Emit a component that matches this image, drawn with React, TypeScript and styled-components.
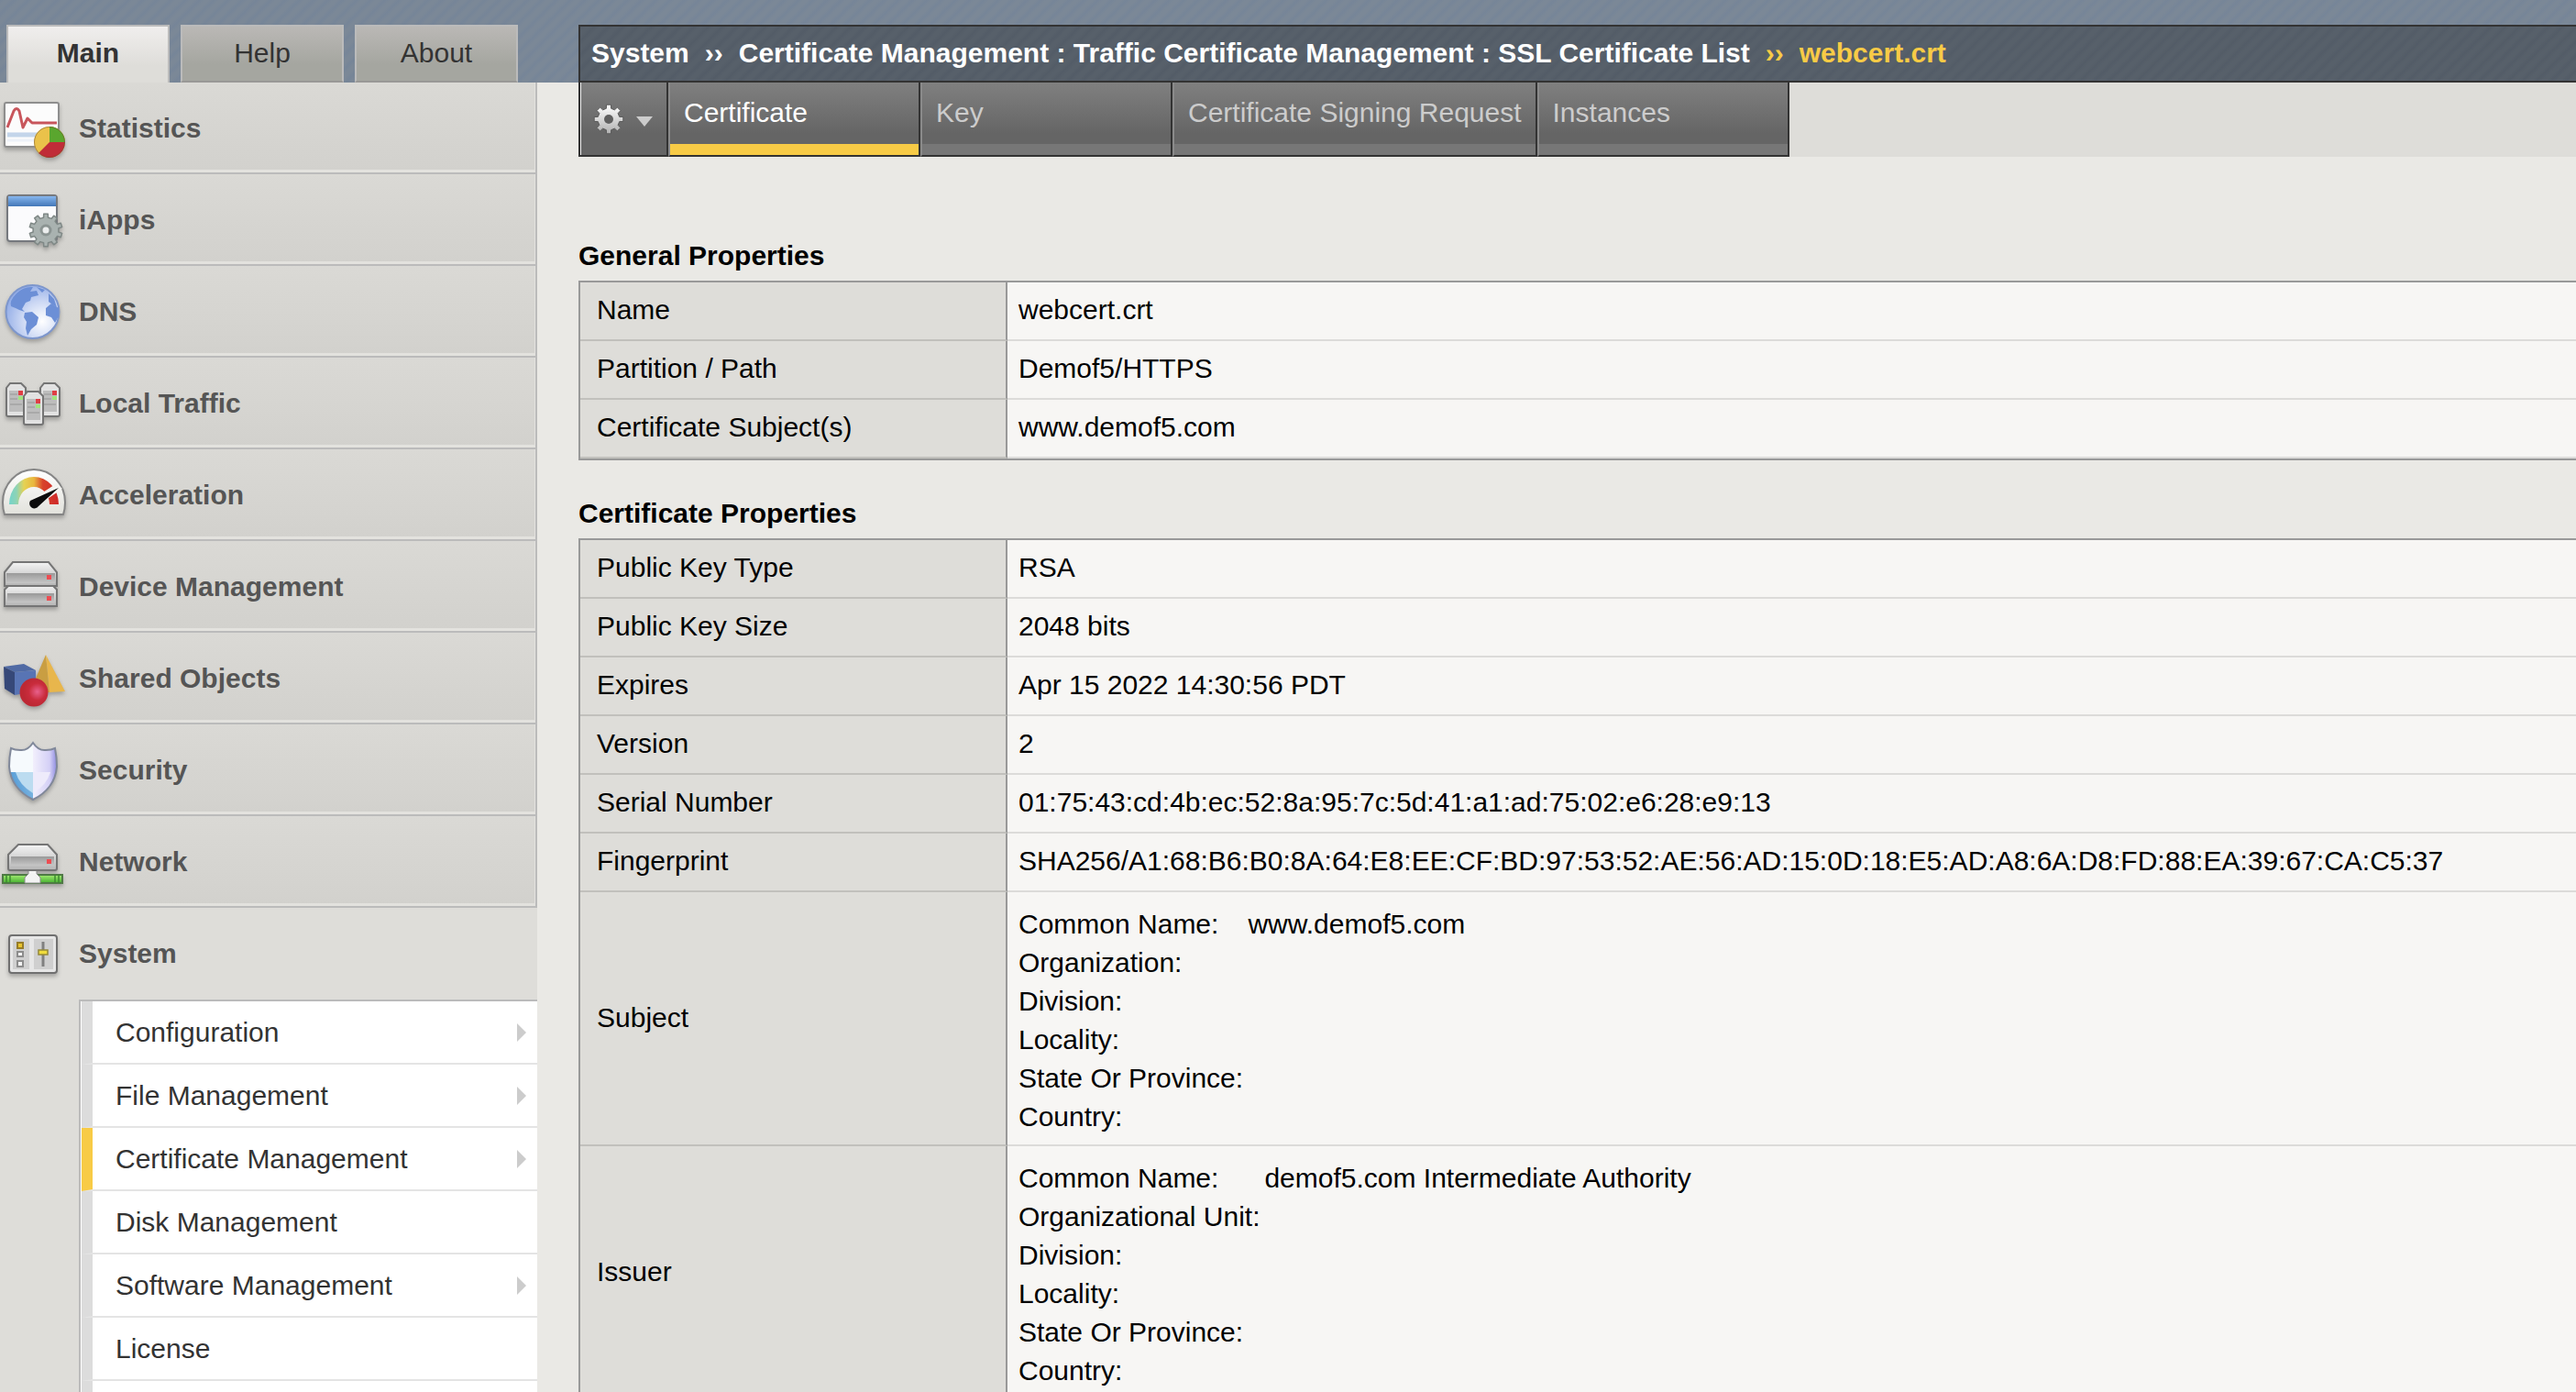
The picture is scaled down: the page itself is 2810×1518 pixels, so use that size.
import React from 'react';
import styled, { createGlobalStyle } from 'styled-components';

const color = {
  page: '#eae9e5',
  panel: '#deddd9',
  line: '#bbbbbb',
  accent: '#f8cb46',
  dark: '#333333',
  outline: '#999999',
};

const GlobalStyle = createGlobalStyle`
  *, *::before, *::after { box-sizing: border-box; }
  body {
    margin: 0;
    background: ${color.page};
    font-family: Arial, "Liberation Sans", Helvetica, sans-serif;
    font-size: 30px;
    line-height: 42px;
    color: #000;
  }
  a { color: inherit; text-decoration: none; }
  button { font: inherit; color: inherit; margin: 0; cursor: pointer; }
  ul, ol, dl, dd { margin: 0; padding: 0; list-style: none; }
`;

const Page = styled.div`
  display: flex;
  flex-direction: column;
  height: 100vh;
  overflow: hidden;
`;

const Header = styled.header`
  display: flex;
  align-items: flex-end;
  flex: none;
  height: 90px;
  background: repeating-linear-gradient(135deg, #768598 0, #7b8897 4px, #7b8897 7px, #768598 11px);
`;

const HeaderTabs = styled.nav`
  display: flex;
  flex: none;
  gap: 12px;
  width: 631px;
  padding-left: 7px;
`;

const HeaderTab = styled.a<{ $active?: boolean }>`
  width: 178px;
  height: 63px;
  padding-top: 8px;
  text-align: center;
  color: #333;
  border: 2px solid ${color.line};
  border-bottom: ${(p) => (p.$active ? '0' : '2px solid #999896')};
  font-weight: ${(p) => (p.$active ? 700 : 400)};
  background: ${(p) =>
    p.$active
      ? 'linear-gradient(#f0eeed, #deddd9 70%)'
      : 'linear-gradient(#bab8b5, #a5a6a0 70%)'};
`;

const Breadcrumb = styled.ol`
  display: flex;
  flex: 1;
  gap: 17px;
  height: 63px;
  padding: 8px 0 0 12px;
  border: 2px solid ${color.dark};
  border-right: 0;
  font-weight: 700;
  white-space: nowrap;
  color: #fff;
  background: repeating-linear-gradient(135deg, #535c67 0, #57606a 4px, #57606a 7px, #535c67 11px);
`;

const Crumb = styled.li<{ $current?: boolean }>`
  color: ${(p) => (p.$current ? color.accent : 'inherit')};
`;

const Body = styled.div`
  display: flex;
  flex: 1;
  min-height: 0;
`;

const Sidebar = styled.nav`
  display: flex;
  flex-direction: column;
  flex: none;
  width: 586px;
  background: ${color.panel};
`;

const NavLink = styled.a<{ $open?: boolean }>`
  display: flex;
  align-items: center;
  flex: none;
  gap: 14px;
  height: 100px;
  font-weight: 700;
  color: #555;
  border-right: 2px solid ${(p) => (p.$open ? 'transparent' : color.line)};
  border-bottom: 2px solid ${(p) => (p.$open ? 'transparent' : color.line)};
  background: ${(p) => (p.$open ? color.panel : 'linear-gradient(#dad9d5, #d2d1cd)')};
  box-shadow: ${(p) => (p.$open ? 'none' : 'inset -1px -3px 0 #e3e2de')};
`;

const NavIcon = styled.svg`
  flex: none;
  width: 72px;
  height: 98px;
  filter: drop-shadow(0 3px 2px rgba(0, 0, 0, 0.25));
`;

const NavLabel = styled.span`
  padding-top: 2px;
`;

const SubMenu = styled.ul`
  display: flex;
  flex-direction: column;
  flex: 1;
  margin-left: 86px;
  padding-left: 1px;
  border-top: 2px solid ${color.line};
  border-left: 2px solid ${color.line};
  background: #fff;
`;

const SubLink = styled.a<{ $active?: boolean }>`
  display: flex;
  align-items: center;
  justify-content: space-between;
  height: 69px;
  padding: 0 12px 0 25px;
  color: #333;
  border-left: 12px solid ${(p) => (p.$active ? color.accent : '#dcdcdc')};
  border-bottom: 2px solid #e4e4e4;
`;

const SubMenuEnd = styled.li`
  flex: 1;
  border-left: 12px solid #dcdcdc;
`;

const SubArrow = styled.span`
  border-left: 10px solid #ccc;
  border-top: 10px solid transparent;
  border-bottom: 10px solid transparent;
`;

const Main = styled.main`
  flex: 1;
  min-width: 0;
  margin-left: 45px;
`;

const Toolbar = styled.div`
  display: flex;
  height: 81px;
  margin-bottom: 87px;
  background: ${color.panel};
`;

const toolbarFill = 'linear-gradient(#808080, #656565 70%)';

const GearButton = styled.button`
  display: flex;
  align-items: center;
  gap: 13px;
  width: 98px;
  padding: 0 0 0 14px;
  border: 2px solid ${color.dark};
  border-top: 0;
  background: ${toolbarFill};
  box-shadow: inset 1px 0 0 #eee;
`;

const DownArrow = styled.span`
  margin-top: 6px;
  border-top: 11px solid #ccc;
  border-left: 9px solid transparent;
  border-right: 9px solid transparent;
`;

const ToolbarTabs = styled.nav`
  display: flex;
`;

const ToolbarTab = styled.a<{ $active?: boolean }>`
  display: flex;
  flex-direction: column;
  justify-content: space-between;
  min-width: 275px;
  white-space: nowrap;
  color: ${(p) => (p.$active ? '#fff' : '#ccc')};
  border-left: 2px solid #8a8a8a;
  border-right: 2px solid ${color.dark};
  border-bottom: 2px solid ${color.dark};
  background: ${toolbarFill};

  &::after {
    content: '';
    height: 12px;
    background: ${(p) => (p.$active ? color.accent : '#777')};
  }
`;

const ToolbarLabel = styled.span`
  padding: 12px 15px 0;
`;

const Section = styled.section`
  margin-bottom: 37px;
`;

const Heading = styled.h2`
  margin: 0 0 6px;
  font-size: 30px;
  line-height: 42px;
`;

const Table = styled.table`
  width: 100%;
  border: 2px solid ${color.outline};
  border-right: 0;
  border-spacing: 0;
`;

const LabelCell = styled.th`
  width: 466px;
  padding: 9px 18px 11px;
  text-align: left;
  font-weight: 400;
  background: ${color.panel};
  border-right: 2px solid ${color.outline};
  border-bottom: 2px solid #c1c0bc;
`;

const ValueCell = styled.td<{ $detailed?: boolean }>`
  padding: ${(p) => (p.$detailed ? '14px 12px 9px' : '9px 12px 11px')};
  background: #f7f6f4;
  border-bottom: 2px solid #dcdbd9;
`;

const Detail = styled.div<{ $gap: number }>`
  display: flex;
  gap: ${(p) => p.$gap}px;
`;

/* Outline of a cog wheel, centred on cx, cy. */
function cog(cx: number, cy: number, outer: number, inner: number, teeth: number) {
  const step = (Math.PI * 2) / teeth;
  const at = (r: number, a: number) =>
    `${(cx + r * Math.sin(a)).toFixed(2)},${(cy - r * Math.cos(a)).toFixed(2)}`;
  const points: string[] = [];
  for (let i = 0; i < teeth; i += 1) {
    const a = i * step;
    points.push(
      at(inner, a - step * 0.28),
      at(outer, a - step * 0.2),
      at(outer, a + step * 0.2),
      at(inner, a + step * 0.28),
    );
  }
  return points.join(' ');
}

const Gradients = () => (
  <svg width="0" height="0" style={{ display: 'block' }} aria-hidden="true">
    <defs>
      <linearGradient id="metal" x2="0" y2="1">
        <stop offset="0" stopColor="#f4f4f4" />
        <stop offset="1" stopColor="#b4b4b4" />
      </linearGradient>
      <linearGradient id="slot" x2="0" y2="1">
        <stop offset="0" stopColor="#999" />
        <stop offset="1" stopColor="#c6c6c6" />
      </linearGradient>
      <linearGradient id="titlebar" x2="0" y2="1">
        <stop offset="0" stopColor="#86b6ee" />
        <stop offset="1" stopColor="#4377b8" />
      </linearGradient>
      <radialGradient id="sea" cx="0.68" cy="0.68" r="0.75">
        <stop offset="0" stopColor="#ffffff" />
        <stop offset="0.5" stopColor="#ccd8f4" />
        <stop offset="1" stopColor="#8faae6" />
      </radialGradient>
      <linearGradient id="dial">
        <stop offset="0" stopColor="#74d4cb" />
        <stop offset="0.15" stopColor="#8fd3b5" />
        <stop offset="0.3" stopColor="#e5d254" />
        <stop offset="0.5" stopColor="#e9b73d" />
        <stop offset="0.68" stopColor="#d8432b" />
        <stop offset="1" stopColor="#cf2a2a" />
      </linearGradient>
      <linearGradient id="face" x2="0" y2="1">
        <stop offset="0" stopColor="#fff" />
        <stop offset="1" stopColor="#e2e2dc" />
      </linearGradient>
      <radialGradient id="ball" cx="0.62" cy="0.48" r="0.5">
        <stop offset="0" stopColor="#e8608c" />
        <stop offset="0.6" stopColor="#c92c3c" />
        <stop offset="1" stopColor="#bd2834" />
      </radialGradient>
      <linearGradient id="cable" x2="0" y2="1">
        <stop offset="0" stopColor="#a4ec74" />
        <stop offset="1" stopColor="#44b02e" />
      </linearGradient>
      <linearGradient id="shieldRight">
        <stop offset="0" stopColor="#f2effc" />
        <stop offset="0.7" stopColor="#d4d0f6" />
        <stop offset="1" stopColor="#8c8ae0" />
      </linearGradient>
      <linearGradient id="shieldLeft" x1="1" x2="0" y2="1">
        <stop offset="0" stopColor="#a8d0ec" />
        <stop offset="1" stopColor="#3f8ed0" />
      </linearGradient>
      <linearGradient id="gear" x2="0" y2="1">
        <stop offset="0" stopColor="#ffffff" />
        <stop offset="1" stopColor="#b0b0b0" />
      </linearGradient>
    </defs>
  </svg>
);

const StatisticsIcon = () => (
  <>
    <rect x="5" y="22" width="59" height="48" rx="2" fill="#fcfcfc" stroke="#8e8e8e" strokeWidth="2" />
    <path d="M8 56h55M8 63h55" stroke="#eef2f8" strokeWidth="3" />
    <path d="M8 57h40" stroke="#c3d5ea" strokeWidth="5" />
    <path d="M8 49 L15 31 Q18 26 21 31 L25 49 L30 39 L35 44 H62" fill="none" stroke="#c8565c" strokeWidth="3" strokeLinejoin="round" />
    <circle cx="54" cy="65" r="17" fill="#eac24a" />
    <path d="M54 65V48A17 17 0 0 1 71 65Z" fill="#5aa62e" />
    <path d="M54 65H71A17 17 0 0 1 42 77Z" fill="#c02c38" />
    <circle cx="54" cy="65" r="16.5" fill="none" stroke="#705030" strokeOpacity="0.5" />
  </>
);

const IAppsIcon = () => (
  <>
    <rect x="8" y="23" width="54" height="50" rx="3" fill="#fbfbfd" stroke="#76797e" strokeWidth="2" />
    <path d="M9 24H61V35H9Z" fill="url(#titlebar)" />
    <polygon points={cog(50, 61, 18, 14, 10)} fill="#a9b2b0" stroke="#7f8886" strokeWidth="1.5" strokeLinejoin="round" />
    <circle cx="50" cy="61" r="5" fill="#eceeee" stroke="#8b9492" strokeWidth="3" />
  </>
);

const DnsIcon = () => (
  <>
    <circle cx="35.5" cy="50" r="29" fill="url(#sea)" stroke="#7d96cc" strokeWidth="2" />
    <path d="M12 44 Q10 38 18 30 Q26 22 36 23 L33 28 L40 27 L42 32 L34 34 L33 38 L28 40 L24 47 L27 50 L21 48 L17 46 Z" fill="#6c8fd6" />
    <path d="M40 23 L49 26 L46 29 Z M53 30 L59 36 L62 45 L57 42 L53 39 Z" fill="#6c8fd6" />
    <path d="M50 46 L56 41 L64 46 V55 L60 62 L56 56 L50 54 Z" fill="#6c8fd6" />
    <path d="M27 51 L35 50 L42 56 L40 64 L34 69 L30 76 L28 68 L29 61 L26 56 Z" fill="#6c8fd6" />
  </>
);

const ServerTower = ({ x, y }: { x: number; y: number }) => (
  <g transform={`translate(${x} ${y})`}>
    <path d="M1 35V6L5 1H17L22 6V35Q22 37 20 37H3Q1 37 1 35Z" fill="#e2e2e2" stroke="#757575" strokeWidth="2" />
    <path d="M4 9H19V32H4Z" fill="#bdbdbd" />
    <path d="M5 13h8M5 18h8M5 24h13" stroke="#a2a2a2" strokeWidth="1.5" />
    <path d="M14 9h5v5h-5Z" fill="#df3e44" />
    <path d="M14 15h5v4h-5Z" fill="#a2e47c" />
  </g>
);

const LocalTrafficIcon = () => (
  <>
    <ServerTower x={6} y={27} />
    <ServerTower x={43} y={27} />
    <ServerTower x={25} y={36} />
  </>
);

const AccelerationIcon = () => (
  <>
    <path d="M3 58A34 36 0 0 1 71 58Q71 65 69 71H5Q3 65 3 58Z" fill="url(#face)" stroke="#858585" strokeWidth="2" />
    <path d="M10 60A27 30 0 0 1 64 60H54A17 19 0 0 0 20 60Z" fill="url(#dial)" />
    <path d="M62 37 L68 43 L40 62 L33 56 Z" fill="#f4f4f0" />
    <path d="M64 42 L42 62 A5 5 0 1 1 33 56 Z" fill="#0c0c0c" />
  </>
);

const DeviceIcon = () => (
  <>
    <path d="M5 53L10 48H57L62 53V71H5Z" fill="url(#metal)" stroke="#757575" strokeWidth="2" />
    <path d="M8 57H59V67H8Z" fill="url(#slot)" />
    <path d="M5 34L14 23H53L62 34V49H5Z" fill="url(#metal)" stroke="#757575" strokeWidth="2" />
    <path d="M7 35H60V46H7Z" fill="url(#slot)" />
    <path d="M51 37h5v5h-5ZM51 60h5v5h-5Z" fill="#ee4c52" />
  </>
);

const SharedObjectsIcon = () => (
  <>
    <path d="M4 37L26 34L39 41L16 43Z" fill="#506aa4" />
    <path d="M4 37L16 43V68L5 61Z" fill="#364878" />
    <path d="M16 43L39 41V64L16 68Z" fill="#5874b4" />
    <path d="M50 24L38 52V65H54Z" fill="#c99e42" />
    <path d="M50 24L71 64L54 65Z" fill="#e8b64c" />
    <circle cx="37" cy="65" r="15.5" fill="url(#ball)" />
  </>
);

const SecurityIcon = () => (
  <>
    <path d="M36 20Q42 29 50 28Q56 28 60 26Q62 36 62 46Q60 70 36 82Z" fill="url(#shieldRight)" />
    <path d="M36 20Q30 29 22 28Q16 28 12 26Q10 36 10 46Q12 70 36 82Z" fill="url(#shieldLeft)" />
    <path d="M36 20Q30 29 22 28Q16 28 12 26Q10 36 10 52H36Z" fill="#f6fafd" />
    <path d="M36 52H55Q51 66 36 75Z" fill="#eeebfb" />
    <path d="M36 52H17Q21 66 36 75Z" fill="#bcdcf0" />
    <path d="M36 20Q42 29 50 28Q56 28 60 26Q62 36 62 46Q60 70 36 82Q12 70 10 46Q10 36 12 26Q16 28 22 28Q30 29 36 20Z" fill="none" stroke="#80889a" strokeWidth="2" />
  </>
);

const NetworkIcon = () => (
  <>
    <path d="M3 64H68V73H3Z" fill="url(#cable)" stroke="#4f7a45" strokeWidth="2" />
    <path d="M7 64v9M11 64v9M60 64v9M64 64v9" stroke="#3e8a30" strokeWidth="1.5" />
    <path d="M31 59H40V63L44 67V73H27V67L31 63Z" fill="#f3f3f3" stroke="#8a8a8a" />
    <path d="M9 42L20 31H52L62 42V57Q62 59 60 59H11Q9 59 9 57Z" fill="url(#metal)" stroke="#757575" strokeWidth="2" />
    <path d="M12 44H59V54H12Z" fill="url(#slot)" />
    <path d="M51 47h5v5h-5Z" fill="#ee4c52" />
  </>
);

const SystemIcon = () => (
  <>
    <rect x="10" y="30" width="52" height="41" rx="3" fill="#e6e6e6" stroke="#707070" strokeWidth="2" />
    <path d="M14 34H32V67H14ZM37 34H58V67H37Z" fill="#cfcfcf" />
    <path d="M19 38h6v6h-6Z" fill="#eac52e" stroke="#967c28" strokeWidth="2" />
    <path d="M19 48h6v5h-6ZM19 58h6v6h-6Z" fill="#f4f4f4" stroke="#8c8c8c" strokeWidth="2" />
    <path d="M47 37V64" stroke="#808080" strokeWidth="3" />
    <path d="M42 46h10v5h-10Z" fill="#f0dc3c" stroke="#948838" strokeWidth="1.5" />
  </>
);

const navItems: { label: string; Icon: React.FC; open?: boolean }[] = [
  { label: 'Statistics', Icon: StatisticsIcon },
  { label: 'iApps', Icon: IAppsIcon },
  { label: 'DNS', Icon: DnsIcon },
  { label: 'Local Traffic', Icon: LocalTrafficIcon },
  { label: 'Acceleration', Icon: AccelerationIcon },
  { label: 'Device Management', Icon: DeviceIcon },
  { label: 'Shared Objects', Icon: SharedObjectsIcon },
  { label: 'Security', Icon: SecurityIcon },
  { label: 'Network', Icon: NetworkIcon },
  { label: 'System', Icon: SystemIcon, open: true },
];

const subItems = [
  { label: 'Configuration', more: true },
  { label: 'File Management', more: true },
  { label: 'Certificate Management', more: true, active: true },
  { label: 'Disk Management' },
  { label: 'Software Management', more: true },
  { label: 'License' },
];

const tabs = ['Certificate', 'Key', 'Certificate Signing Request', 'Instances'];

type Row = { label: string; value: string | string[]; commonName?: string; gap?: number };

const generalRows: Row[] = [
  { label: 'Name', value: 'webcert.crt' },
  { label: 'Partition / Path', value: 'Demof5/HTTPS' },
  { label: 'Certificate Subject(s)', value: 'www.demof5.com' },
];

const certificateRows: Row[] = [
  { label: 'Public Key Type', value: 'RSA' },
  { label: 'Public Key Size', value: '2048 bits' },
  { label: 'Expires', value: 'Apr 15 2022 14:30:56 PDT' },
  { label: 'Version', value: '2' },
  { label: 'Serial Number', value: '01:75:43:cd:4b:ec:52:8a:95:7c:5d:41:a1:ad:75:02:e6:28:e9:13' },
  {
    label: 'Fingerprint',
    value:
      'SHA256/A1:68:B6:B0:8A:64:E8:EE:CF:BD:97:53:52:AE:56:AD:15:0D:18:E5:AD:A8:6A:D8:FD:88:EA:39:67:CA:C5:37',
  },
  {
    label: 'Subject',
    commonName: 'www.demof5.com',
    gap: 32,
    value: ['Organization:', 'Division:', 'Locality:', 'State Or Province:', 'Country:'],
  },
  {
    label: 'Issuer',
    commonName: 'demof5.com Intermediate Authority',
    gap: 50,
    value: ['Organizational Unit:', 'Division:', 'Locality:', 'State Or Province:', 'Country:'],
  },
];

const PropertyTable = ({ title, rows }: { title: string; rows: Row[] }) => (
  <Section>
    <Heading>{title}</Heading>
    <Table>
      <tbody>
        {rows.map(({ label, value, commonName, gap = 0 }) => (
          <tr key={label}>
            <LabelCell scope="row">{label}</LabelCell>
            {Array.isArray(value) ? (
              <ValueCell $detailed>
                <Detail $gap={gap}>
                  <span>Common Name:</span>
                  <span>{commonName}</span>
                </Detail>
                {value.map((line) => (
                  <div key={line}>{line}</div>
                ))}
              </ValueCell>
            ) : (
              <ValueCell>{value}</ValueCell>
            )}
          </tr>
        ))}
      </tbody>
    </Table>
  </Section>
);

export default function App() {
  return (
    <Page>
      <GlobalStyle />
      <Gradients />
      <Header>
        <HeaderTabs>
          <HeaderTab href="#main" $active>Main</HeaderTab>
          <HeaderTab href="#help">Help</HeaderTab>
          <HeaderTab href="#about">About</HeaderTab>
        </HeaderTabs>
        <Breadcrumb>
          <Crumb>System</Crumb>
          <Crumb>››</Crumb>
          <Crumb>Certificate Management : Traffic Certificate Management : SSL Certificate List</Crumb>
          <Crumb $current>››</Crumb>
          <Crumb $current>webcert.crt</Crumb>
        </Breadcrumb>
      </Header>
      <Body>
        <Sidebar>
          {navItems.map(({ label, Icon, open }) => (
            <NavLink key={label} href="#nav" $open={open}>
              <NavIcon viewBox="0 0 72 98" aria-hidden="true">
                <Icon />
              </NavIcon>
              <NavLabel>{label}</NavLabel>
            </NavLink>
          ))}
          <SubMenu>
            {subItems.map(({ label, more, active }) => (
              <li key={label}>
                <SubLink href="#sub" $active={active}>
                  {label}
                  {more && <SubArrow />}
                </SubLink>
              </li>
            ))}
            <SubMenuEnd />
          </SubMenu>
        </Sidebar>
        <Main>
          <Toolbar>
            <GearButton type="button" aria-label="Options">
              <svg width="34" height="34" viewBox="0 0 34 34" aria-hidden="true">
                <polygon points={cog(17, 17, 16, 12, 8)} fill="url(#gear)" stroke="#5a5a5a" strokeWidth="1" />
                <circle cx="17" cy="17" r="5" fill="#606060" />
              </svg>
              <DownArrow />
            </GearButton>
            <ToolbarTabs>
              {tabs.map((tab, i) => (
                <ToolbarTab key={tab} href="#tab" $active={i === 0}>
                  <ToolbarLabel>{tab}</ToolbarLabel>
                </ToolbarTab>
              ))}
            </ToolbarTabs>
          </Toolbar>
          <PropertyTable title="General Properties" rows={generalRows} />
          <PropertyTable title="Certificate Properties" rows={certificateRows} />
        </Main>
      </Body>
    </Page>
  );
}
